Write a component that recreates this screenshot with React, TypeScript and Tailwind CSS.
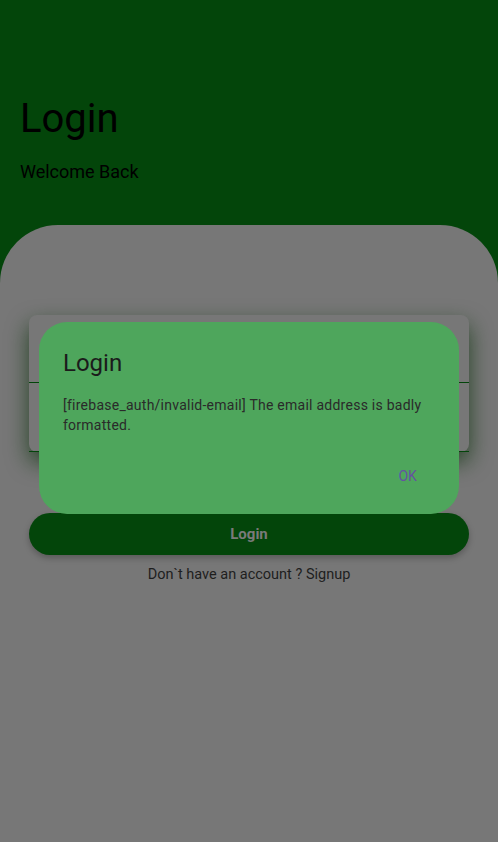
export default function App() {
  return (
    <div
      className="relative w-[498px] h-[842px] overflow-hidden bg-[#03450a]"
      style={{ fontFamily: 'Roboto, "Noto Sans", sans-serif' }}
    >
      {/* Header */}
      <div className="h-[225px] px-5 pt-[95px]">
        <h1 className="text-[40px] leading-[48px] text-black">Login</h1>
        <p className="mt-[17px] text-[18px] leading-[24px] text-black">Welcome Back</p>
      </div>

      {/* Sheet */}
      <div className="h-[617px] rounded-t-[58px] bg-[#777777] px-[29px] pt-[90px]">
        <div className="h-[137px] rounded-[8px] bg-[#777777] shadow-[0_10px_22px_rgba(10,50,10,0.75)] flex flex-col">
          <div className="h-[68px] border-b border-[#03450a]" />
          <div className="h-[69px] border-b border-[#03450a]" />
        </div>
        <button className="mt-[61px] w-full h-[42px] rounded-full bg-[#03450a] text-[15px] font-bold text-[#7a7a7a] shadow-[0_3px_6px_rgba(0,0,0,0.25)]">
          Login
        </button>
        <p className="mt-[10px] text-center text-[14.5px] leading-[20px] text-[#1e1e1e]">
          Don`t have an account ? Signup
        </p>
      </div>

      {/* Dialog */}
      <div className="absolute left-[39px] top-[322px] w-[420px] h-[192px] rounded-[28px] bg-[#4ea65c] px-6 pt-[25px]">
        <h2 className="text-[24px] leading-[32px] text-[#1b1b1b]">Login</h2>
        <p className="mt-[16px] text-[14px] leading-[20px] tracking-[0.25px] text-[#2a2a2a]">
          [firebase_auth/invalid-email] The email address is badly formatted.
        </p>
        <div className="mt-[31px] flex justify-end pr-[18px]">
          <span className="text-[14px] leading-[20px] tracking-[0.1px] text-[#6552a2]">OK</span>
        </div>
      </div>
    </div>
  );
}
